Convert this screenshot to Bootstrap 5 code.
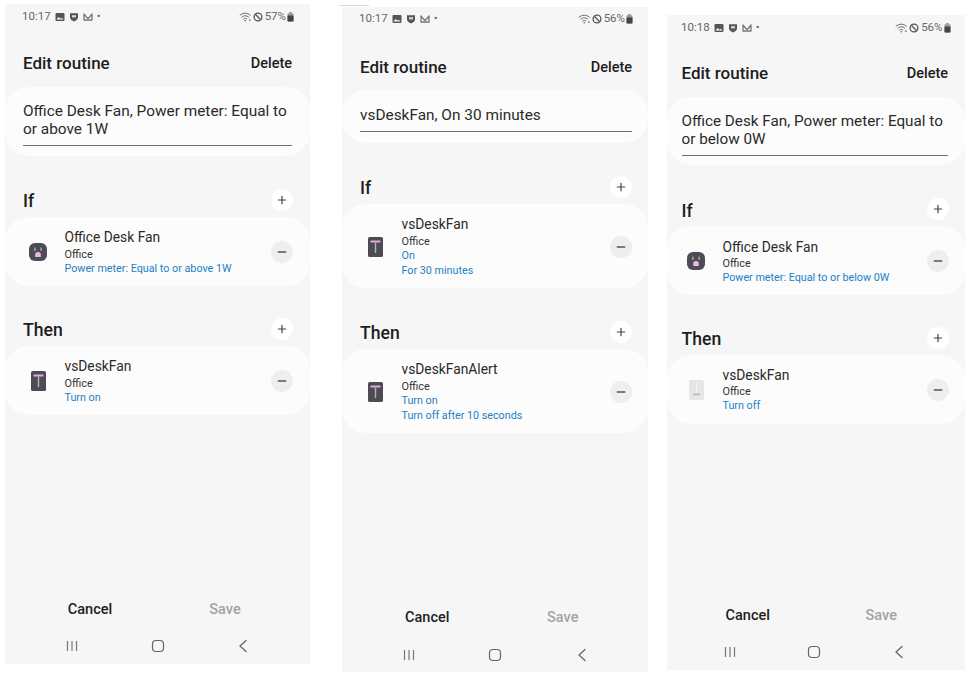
<!DOCTYPE html>
<html lang="en">
<head>
<meta charset="utf-8">
<title>Edit routine</title>
<link href="https://cdn.jsdelivr.net/npm/bootstrap@5.3.0/dist/css/bootstrap.min.css" rel="stylesheet">
<style>
html,body{height:673px;overflow:hidden;background:#fff}
body{font-family:Roboto,"Liberation Sans",sans-serif;color:#252525}
.board{padding-left:5px;align-items:flex-start}
.phone{background:#f6f6f6;overflow:hidden;flex:none;position:relative}
.p1{width:305px;height:660px;margin-top:4px;--x:18px;--r:18px;--b:-1px;--ic:23px}
.p2{width:306px;height:665px;margin-top:7px;margin-left:32px;--x:18px;--r:16px;--b:0px;--ic:23px}
.p3{width:298px;height:655px;margin-top:15px;margin-left:19px;--x:14.5px;--r:17px;--b:-1px;--ic:19px}
.cutline{position:absolute;left:340px;top:5px;width:29px;height:1px;background:#d9d9d9}
.stat{height:24px;padding:2px 16px 0 17px;font-size:11.5px;color:#666;gap:4px}
.p2 .stat{padding:0 15px 0 17px}
.p3 .stat{padding:2px 14.5px 0 14px}
.stat svg{display:block;flex:none}
.stat-r{gap:1px}
.stat-r span{margin:0 0 0 1px}
.title-row{height:40px;margin-top:16px;padding:0 var(--r) 0 var(--x)}
.p2 .title-row{margin-top:17px}
.p3 .title-row{margin-top:15px}
.title-txt{font-size:17px;font-weight:500;color:#1d1d1d}
.del-txt{font-size:14.5px;font-weight:500;color:#1d1d1d}
.name-box{background:#fcfcfc;border-radius:24px;margin-top:3px;padding:15px var(--r) 9.5px var(--x)}
.p2 .name-box{margin-top:2px;padding-top:16px;padding-bottom:10.5px}
.p3 .name-box{padding-bottom:9px}
.name-in{font-size:15.4px;line-height:18px;color:#2a2a2a;border-bottom:1.5px solid #6f6f6f;padding-bottom:7px}
.p3 .name-in{font-size:15.25px}
.sect-head{height:28px;padding:0 var(--r) 0 var(--x);margin-top:30px}
.p1 .item-box+.sect-head{margin-top:29px}
.p3 .item-box+.sect-head{margin-top:28.5px}
.sect-txt{font-size:17.6px;font-weight:500;color:#1d1d1d;padding-top:3.5px}
.add-btn,.rem-btn{width:22px;height:22px;border-radius:50%;padding:0;border:0;flex:none;margin-right:var(--b)}
.add-btn svg,.rem-btn svg{display:block}
.add-btn{background:#fff}
.rem-btn{background:#eeeeee}
.item-box{background:#fcfcfc;border-radius:24px;margin-top:3px;padding:11.5px var(--r) 9px var(--ic)}
.p2 .item-box{padding-bottom:9.5px}
.p3 .item-box{padding-bottom:10px}
.ico-slot{width:20px;flex:none;margin-right:16.5px}
.ico-slot svg{display:block;margin:0 auto}
.txts{flex:1;min-width:0}
.dev{font-size:13.8px;line-height:18px;color:#2a2a2a}
.room{font-size:10.9px;line-height:14px;margin-top:2px;color:#333}
.p3 .room{margin-top:1px}
.act{font-size:10.75px;line-height:14.5px;color:#2380c6}
.foot{position:absolute;left:0;right:0;bottom:0}
.foot-btns{padding:0 17.5px;height:28px}
.foot-btns>div{width:50%;text-align:center;font-size:14.5px;font-weight:500;color:#1d1d1d}
.foot-btns>.off{color:#a3a3a3}
.navs{padding:0 24px;height:24px;margin-top:10px;margin-bottom:6px}
.navs>div{flex:1;display:flex;justify-content:center}
.p2 .navs{padding:0 23px 0 24px;margin-top:11px;margin-bottom:5px}
.p3 .foot-btns{padding:0 17px 0 14px}
.p3 .navs{padding:0 24px 0 21px}
</style>
</head>
<body>
<svg width="0" height="0" class="position-absolute">
<defs>
<symbol id="i-pic" viewBox="0 0 10 10"><rect x=".5" y="1" width="9" height="8" rx="1" fill="#555"/><path d="M1.5 7.5l2.2-2.6 1.7 1.8 1.2-1 1.9 1.8z" fill="#fff"/></symbol>
<symbol id="i-shield" viewBox="0 0 10 10"><path d="M1 1.2h8v4.3c0 2-2.2 3.3-4 4-1.8-.7-4-2-4-4z" fill="#555"/><rect x="3" y="3.2" width="4" height="2.2" fill="#d8d8d8"/></symbol>
<symbol id="i-mail" viewBox="0 0 10 10"><path d="M1 8V2l2.4 3L5 6.4 6.6 5 9 2v6z" fill="none" stroke="#777" stroke-width="1.3" stroke-linejoin="round"/></symbol>
<symbol id="i-wifi" viewBox="0 0 14 11"><path d="M1 3.5c3.4-3 8-3 11.4 0M3 5.6c2.3-2 5.1-2 7.4 0M5 7.7c1.2-1 2.3-1 3.4 0" fill="none" stroke="#666" stroke-width="1.1" stroke-linecap="round"/><circle cx="6.7" cy="9.6" r=".9" fill="#666"/><circle cx="11.8" cy="9" r=".9" fill="#666"/></symbol>
<symbol id="i-block" viewBox="0 0 10 10"><circle cx="5" cy="5" r="3.9" fill="none" stroke="#555" stroke-width="1.3"/><path d="M2.3 2.3l5.4 5.4" stroke="#555" stroke-width="1.3"/></symbol>
<symbol id="i-batt" viewBox="0 0 7 10"><rect x="2.2" y="0" width="2.6" height="1.4" fill="#999"/><rect x=".5" y="1.2" width="6" height="8.3" rx=".7" fill="#999"/><rect x=".5" y="3.4" width="6" height="6.1" rx=".7" fill="#444"/></symbol>
<symbol id="i-plus" viewBox="0 0 22 22"><path d="M7.3 11h7.4M11 7.3v7.4" stroke="#444" stroke-width="1.2" stroke-linecap="round"/></symbol>
<symbol id="i-minus" viewBox="0 0 22 22"><path d="M7.3 11h7.4" stroke="#555" stroke-width="1.5" stroke-linecap="round"/></symbol>
<symbol id="i-plug" viewBox="0 0 18 18"><rect width="18" height="18" rx="6" fill="#4d4b53"/><rect x="5" y="4.6" width="1.7" height="3.4" rx=".6" fill="#9a97a0"/><rect x="11.3" y="4.6" width="1.7" height="3.4" rx=".6" fill="#9a97a0"/><path d="M6.2 14v-2.2a2.8 2.8 0 0 1 5.6 0V14z" fill="#eeb6e6"/></symbol>
<symbol id="i-tee" viewBox="0 0 15 20"><rect width="15" height="20" rx="1.6" fill="#4e4c52"/><rect x="2.5" y="3.4" width="10" height="2.2" rx=".5" fill="#e6a8e2"/><rect x="6.8" y="5.6" width="1.4" height="10.4" fill="#b7b2b9"/></symbol>
<symbol id="i-off" viewBox="0 0 15 20"><rect width="15" height="20" rx="1.6" fill="#e6e6e6"/><rect x="7" y="2" width="1" height="11" fill="#f2f2f2"/><rect x="4" y="13.4" width="7" height="1.8" rx=".5" fill="#b9b9b9"/></symbol>
<symbol id="i-back" viewBox="0 0 14 14"><path d="M10 1.5L4 7l6 5.5" fill="none" stroke="#666" stroke-width="1.3" stroke-linecap="round" stroke-linejoin="round"/></symbol>
<symbol id="i-home" viewBox="0 0 14 14"><rect x="1.5" y="1.5" width="11" height="11" rx="3.5" fill="none" stroke="#666" stroke-width="1.2"/></symbol>
<symbol id="i-recent" viewBox="0 0 14 14"><path d="M2.5 2v10M7 2v10M11.5 2v10" stroke="#777" stroke-width="1.2"/></symbol>
</defs>
</svg>
<div class="cutline"></div>
<div class="board d-flex">

<section class="phone p1">
  <div class="stat d-flex align-items-center">
    <span>10:17</span>
    <svg width="10" height="10"><use href="#i-pic"/></svg>
    <svg width="10" height="10"><use href="#i-shield"/></svg>
    <svg width="10" height="10"><use href="#i-mail"/></svg>
    <span>•</span>
    <div class="stat-r ms-auto d-flex align-items-center">
      <svg width="13" height="10" viewBox="0 0 14 11"><use href="#i-wifi"/></svg>
      <svg width="10" height="10"><use href="#i-block"/></svg>
      <span>57%</span>
      <svg width="7" height="10"><use href="#i-batt"/></svg>
    </div>
  </div>
  <div class="title-row d-flex justify-content-between align-items-center"><span class="title-txt">Edit routine</span><span class="del-txt">Delete</span></div>
  <div class="name-box"><div class="name-in">Office Desk Fan, Power meter: Equal to or above 1W</div></div>
  <div class="sect-head d-flex justify-content-between align-items-center"><span class="sect-txt">If</span><button class="add-btn" aria-label="Add"><svg width="22" height="22"><use href="#i-plus"/></svg></button></div>
  <div class="item-box d-flex align-items-center">
    <div class="ico-slot"><svg width="18" height="18"><use href="#i-plug"/></svg></div>
    <div class="txts"><div class="dev">Office Desk Fan</div><div class="room">Office</div><div class="act">Power meter: Equal to or above 1W</div></div>
    <button class="rem-btn" aria-label="Remove"><svg width="22" height="22"><use href="#i-minus"/></svg></button>
  </div>
  <div class="sect-head d-flex justify-content-between align-items-center"><span class="sect-txt">Then</span><button class="add-btn" aria-label="Add"><svg width="22" height="22"><use href="#i-plus"/></svg></button></div>
  <div class="item-box d-flex align-items-center">
    <div class="ico-slot"><svg width="15" height="20"><use href="#i-tee"/></svg></div>
    <div class="txts"><div class="dev">vsDeskFan</div><div class="room">Office</div><div class="act">Turn on</div></div>
    <button class="rem-btn" aria-label="Remove"><svg width="22" height="22"><use href="#i-minus"/></svg></button>
  </div>
  <div class="foot">
    <div class="foot-btns d-flex align-items-center"><div>Cancel</div><div class="off">Save</div></div>
    <div class="navs d-flex align-items-center"><div><svg width="14" height="14"><use href="#i-recent"/></svg></div><div><svg width="14" height="14"><use href="#i-home"/></svg></div><div><svg width="14" height="14"><use href="#i-back"/></svg></div></div>
  </div>
</section>

<section class="phone p2">
  <div class="stat d-flex align-items-center">
    <span>10:17</span>
    <svg width="10" height="10"><use href="#i-pic"/></svg>
    <svg width="10" height="10"><use href="#i-shield"/></svg>
    <svg width="10" height="10"><use href="#i-mail"/></svg>
    <span>•</span>
    <div class="stat-r ms-auto d-flex align-items-center">
      <svg width="13" height="10" viewBox="0 0 14 11"><use href="#i-wifi"/></svg>
      <svg width="10" height="10"><use href="#i-block"/></svg>
      <span>56%</span>
      <svg width="7" height="10"><use href="#i-batt"/></svg>
    </div>
  </div>
  <div class="title-row d-flex justify-content-between align-items-center"><span class="title-txt">Edit routine</span><span class="del-txt">Delete</span></div>
  <div class="name-box"><div class="name-in">vsDeskFan, On 30 minutes</div></div>
  <div class="sect-head d-flex justify-content-between align-items-center"><span class="sect-txt">If</span><button class="add-btn" aria-label="Add"><svg width="22" height="22"><use href="#i-plus"/></svg></button></div>
  <div class="item-box d-flex align-items-center">
    <div class="ico-slot"><svg width="15" height="20"><use href="#i-tee"/></svg></div>
    <div class="txts"><div class="dev">vsDeskFan</div><div class="room">Office</div><div class="act">On</div><div class="act">For 30 minutes</div></div>
    <button class="rem-btn" aria-label="Remove"><svg width="22" height="22"><use href="#i-minus"/></svg></button>
  </div>
  <div class="sect-head d-flex justify-content-between align-items-center"><span class="sect-txt">Then</span><button class="add-btn" aria-label="Add"><svg width="22" height="22"><use href="#i-plus"/></svg></button></div>
  <div class="item-box d-flex align-items-center">
    <div class="ico-slot"><svg width="15" height="20"><use href="#i-tee"/></svg></div>
    <div class="txts"><div class="dev">vsDeskFanAlert</div><div class="room">Office</div><div class="act">Turn on</div><div class="act">Turn off after 10 seconds</div></div>
    <button class="rem-btn" aria-label="Remove"><svg width="22" height="22"><use href="#i-minus"/></svg></button>
  </div>
  <div class="foot">
    <div class="foot-btns d-flex align-items-center"><div>Cancel</div><div class="off">Save</div></div>
    <div class="navs d-flex align-items-center"><div><svg width="14" height="14"><use href="#i-recent"/></svg></div><div><svg width="14" height="14"><use href="#i-home"/></svg></div><div><svg width="14" height="14"><use href="#i-back"/></svg></div></div>
  </div>
</section>

<section class="phone p3">
  <div class="stat d-flex align-items-center">
    <span>10:18</span>
    <svg width="10" height="10"><use href="#i-pic"/></svg>
    <svg width="10" height="10"><use href="#i-shield"/></svg>
    <svg width="10" height="10"><use href="#i-mail"/></svg>
    <span>•</span>
    <div class="stat-r ms-auto d-flex align-items-center">
      <svg width="13" height="10" viewBox="0 0 14 11"><use href="#i-wifi"/></svg>
      <svg width="10" height="10"><use href="#i-block"/></svg>
      <span>56%</span>
      <svg width="7" height="10"><use href="#i-batt"/></svg>
    </div>
  </div>
  <div class="title-row d-flex justify-content-between align-items-center"><span class="title-txt">Edit routine</span><span class="del-txt">Delete</span></div>
  <div class="name-box"><div class="name-in">Office Desk Fan, Power meter: Equal to or below 0W</div></div>
  <div class="sect-head d-flex justify-content-between align-items-center"><span class="sect-txt">If</span><button class="add-btn" aria-label="Add"><svg width="22" height="22"><use href="#i-plus"/></svg></button></div>
  <div class="item-box d-flex align-items-center">
    <div class="ico-slot"><svg width="18" height="18"><use href="#i-plug"/></svg></div>
    <div class="txts"><div class="dev">Office Desk Fan</div><div class="room">Office</div><div class="act">Power meter: Equal to or below 0W</div></div>
    <button class="rem-btn" aria-label="Remove"><svg width="22" height="22"><use href="#i-minus"/></svg></button>
  </div>
  <div class="sect-head d-flex justify-content-between align-items-center"><span class="sect-txt">Then</span><button class="add-btn" aria-label="Add"><svg width="22" height="22"><use href="#i-plus"/></svg></button></div>
  <div class="item-box d-flex align-items-center">
    <div class="ico-slot"><svg width="15" height="20"><use href="#i-off"/></svg></div>
    <div class="txts"><div class="dev">vsDeskFan</div><div class="room">Office</div><div class="act">Turn off</div></div>
    <button class="rem-btn" aria-label="Remove"><svg width="22" height="22"><use href="#i-minus"/></svg></button>
  </div>
  <div class="foot">
    <div class="foot-btns d-flex align-items-center"><div>Cancel</div><div class="off">Save</div></div>
    <div class="navs d-flex align-items-center"><div><svg width="14" height="14"><use href="#i-recent"/></svg></div><div><svg width="14" height="14"><use href="#i-home"/></svg></div><div><svg width="14" height="14"><use href="#i-back"/></svg></div></div>
  </div>
</section>

</div>
<script src="https://cdn.jsdelivr.net/npm/bootstrap@5.3.0/dist/js/bootstrap.bundle.min.js"></script>
</body>
</html>
